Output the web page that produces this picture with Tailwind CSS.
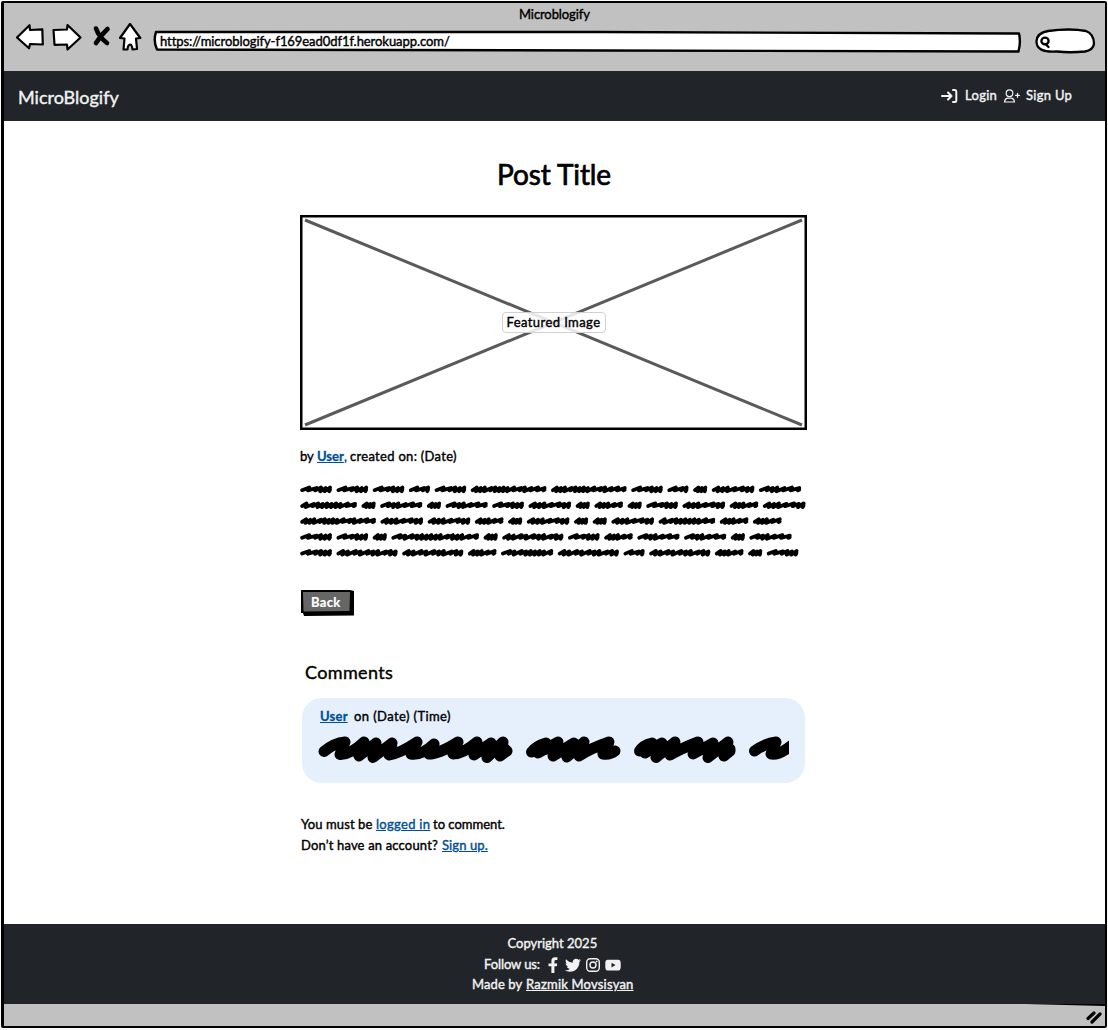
<!DOCTYPE html>
<html lang="en">
<head>
<meta charset="utf-8">
<title>Microblogify</title>
<script src="https://cdn.jsdelivr.net/npm/@tailwindcss/browser@4"></script>
</head>
<body class="h-[1030px] w-[1108px] overflow-hidden bg-[#fafafa] p-[1px] font-[Lato,sans-serif] text-[13px] leading-[20px] text-black [-webkit-text-stroke:0.4px_currentColor]">
<div class="flex h-[1027px] w-[1106px] flex-col overflow-hidden rounded-[2px] border-2 border-black border-l-[3px] bg-white">
  <header class="h-[68px] shrink-0 bg-[#c1c1c1]">
    <div class="flex h-[20px] justify-center pt-[1px]"><span class="w-[71px] whitespace-nowrap tracking-[-0.1px]">Microblogify</span></div>
    <div class="flex h-[32px] items-start pl-[11px]">
      <svg class="h-[30px] w-[130px] shrink-0" viewBox="15 23 130 30" fill="#fff" stroke="#000" stroke-width="2.2" stroke-linejoin="round" stroke-linecap="round">
        <path d="M17 37.5 L29.5 25.2 L30 30 L42.3 29.3 L42.8 44.5 L30 44 L29 48.2 Z"/>
        <path d="M53.5 30 L67 29.5 L67.5 25 L80.5 37.5 L67.5 49.5 L67 44.5 L54.5 44.8 Z"/>
        <path d="M96 28.500Q99 37 107 43 M107.500 29 Q101 35 96 43" fill="none" stroke-width="4.600"/>
        <path d="M130 24 L140.300 38 L136 38.500 L137 49 L132.500 49.500 Q132 44.500 130 44.500 Q127.800 45 127.500 49.500 L123.500 49.500 L124.500 38.500 L120 38 Z"/>
      </svg>
      <div class="relative ml-[7px] mt-[6px] h-[24px] w-[870px] shrink-0">
        <svg class="h-full w-full" viewBox="152 29 870 24" fill="#fff" stroke="#000" stroke-width="2.4" stroke-linejoin="round"><path d="M156 32 L600 32 L1019 33.500 Q1021 42 1018.500 51.500 L600 50.500 L157 49.500 Q153 41 156 32Z"/></svg>
        <span class="absolute left-[8px] top-[2px] w-[290px] whitespace-nowrap tracking-[-0.06px]">https://microblogify-f169ead0df1f.herokuapp.com/</span>
      </div>
      <svg class="ml-[13px] mt-[4px] h-[28px] w-[62px] shrink-0" viewBox="1035 27 62 28" fill="#fff" stroke="#000" stroke-width="2.3" stroke-linecap="round"><path d="M1048 31 Q1070 28 1086 31 Q1094 34 1094 44 Q1093 50 1085 51.500 Q1070 53 1057 51.500 Q1036 53 1036.500 41 Q1037 33 1048 31Z"/><ellipse cx="1045" cy="41" rx="3.600" ry="3.300"/><path d="M1046 44.500 L1048.500 47"/></svg>
    </div>
  </header>
  <nav class="flex h-[50px] shrink-0 items-center bg-[#212529] pl-[14px] text-[#f2f2f2]">
    <span class="w-[922px] whitespace-nowrap pt-px text-[18px]">MicroBlogify</span>
    <svg class="h-[18px] w-[18px]" viewBox="940 87 18 18" fill="none" stroke="currentColor" stroke-width="2" stroke-linecap="round" stroke-linejoin="round"><path d="M942 96H951M948 92.500L951.500 96L948 99.500M953 90H955Q956.300 90 956.300 91.500V100.500Q956.300 102 955 102H953"/></svg>
    <span class="ml-[7px] w-[38px] whitespace-nowrap pb-[2px] tracking-[0.3px]">Login</span>
    <svg class="h-[18px] w-[18px]" viewBox="1003 87 18 18" fill="none" stroke="currentColor" stroke-width="1.200" stroke-linecap="round"><circle cx="1009.500" cy="93.200" r="3.300"/><path d="M1004.500 102Q1005 98.500 1007.500 98.200H1011.500Q1014 98.500 1014.500 102ZM1017.500 93.300V97.300M1015.500 95.300H1019.500"/></svg>
    <span class="ml-[5px] w-[46px] whitespace-nowrap pb-[2px] tracking-[0.3px]">Sign Up</span>
  </nav>
  <main class="flex h-[803px] shrink-0 flex-col pl-[296px]">
    <h1 class="ml-[197px] mt-[33px] h-[40px] text-[28px] leading-[40px] tracking-[-0.1px] [-webkit-text-stroke:0.7px_currentColor]">Post Title</h1>
    <div class="relative mt-[21px] flex h-[215px] w-[507px] items-center justify-center border-2 border-black">
      <svg class="absolute inset-0 h-full w-full" viewBox="0 0 503 211" fill="none" stroke="#5a5a5a" stroke-width="3"><path d="M3 3L500 208M3 208L500 3"/><rect x="0" y="0" width="503" height="211" stroke="#000" stroke-width="1"/></svg>
      <div class="relative flex h-[21px] w-[104px] justify-center rounded-[4px] border border-[#d0d0d0] bg-white/85 leading-[18px]"><span class="w-[94px] whitespace-nowrap tracking-[0.42px]">Featured Image</span></div>
    </div>
    <p class="mt-[16px] flex h-[20px] whitespace-nowrap"><span class="w-[17px]">by</span><span class="w-[33px] text-[#004f98]"><a class="font-bold underline [-webkit-text-stroke:0.3px_currentColor]">User</a><span class="underline">,</span></span><span class="w-[107px] tracking-[0.3px]">created on: (Date)</span></p>
    <svg id="body-text" class="mt-[15px] h-[80px] w-[510px]" viewBox="300 481 510 80" fill="none" stroke="#000" stroke-width="3.700" stroke-linecap="round" stroke-linejoin="round"></svg>
    <div class="relative mt-[28px] h-[27px] w-[54px]">
      <svg class="h-full w-full" viewBox="300 589 54 27"><path d="M301 590L350 590L354 591V615.500L304 616L303 613L301 613Z"/><path d="M303 592L350 592L349.500 611L303.500 611.500Z" fill="#666"/></svg>
      <span class="absolute left-[11px] top-[3px] w-[30px] whitespace-nowrap font-bold tracking-[0.3px] text-white [-webkit-text-stroke:0.2px_currentColor]">Back</span>
    </div>
    <h2 class="ml-[5px] mt-[44px] h-[24px] text-[18px] leading-[24px] tracking-[0.35px]">Comments</h2>
    <section class="ml-[2px] mt-[14px] h-[85px] w-[503px] rounded-[20px] bg-[#e6f0fd] pl-[16px] pt-[8px]">
      <div class="flex h-[20px] whitespace-nowrap pl-[2px]"><a class="w-[28px] font-bold tracking-[0.2px] text-[#004f98] underline [-webkit-text-stroke:0.3px_currentColor]">User</a><span class="ml-[6px] w-[97px] tracking-[0.4px]">on (Date) (Time)</span></div>
      <svg class="mt-[6px] h-[32px] w-[471px]" viewBox="318 733 471 32" fill="none" stroke="#000" stroke-width="11" stroke-linecap="round" stroke-linejoin="round">
        <path d="M324 752.500Q334 744 345 743L340 755.500Q350 756 364 743L359 757L376 744L373 758.500L392 744L389 756Q399 755 417 743L411 755Q421 757 434 745L429 755Q439 755 458 743L453 755Q463 755 477 743L474 756L491 744L487 758.500L503 743L500 757L507 752"/>
        <path d="M531.500 753Q536 747 546 744L538 754L558 743L553 757L574 744L567 758L584 743L579 757Q589 750 609 743L603 755Q610 756 615 752"/>
        <path d="M639.500 752Q643 746 652 744L645 754L662 744L656 758.500L675 743L670 756Q680 750 698 743L693 755L713 744L708 758.500L728 743L724 757L730 752"/>
        <path d="M754.500 752Q766 744 776 743L771 755Q778 757 792 746"/>
        <path d="M362 751H393M474 750H505M537 750H580M645 750H673M706 750H730"/>
      </svg>
    </section>
    <p class="ml-[1px] mt-[31px] flex h-[20px] whitespace-nowrap"><span class="w-[75px] tracking-[0.1px]">You must be</span><a class="w-[54px] text-[#004f98] underline tracking-[0.3px]">logged in</a><span class="ml-[3px] w-[72px]">to comment.</span></p>
    <p class="ml-[1px] mt-[1px] flex h-[20px] whitespace-nowrap"><span class="w-[141px] tracking-[0.17px]">Don’t have an account?</span><a class="w-[46px] text-[#004f98] underline tracking-[0.1px]">Sign up.</a></p>
  </main>
  <footer class="flex h-[80px] shrink-0 flex-col items-center bg-[#212529] pr-[3px] pt-[9px] text-[#f2f2f2]">
    <p class="h-[20px] w-[91px] whitespace-nowrap">Copyright 2025</p>
    <p class="mt-[1px] flex h-[20px] items-center"><span class="w-[62px] whitespace-nowrap tracking-[-0.1px]">Follow us:</span>
      <svg class="mt-[2px] h-[18px] w-[76px]" viewBox="546 956 76 18" fill="currentColor"><path d="M551.400 973V966.300H548.500V963.500H551.400V961Q551.400 957.300 555 957.300H557.400V960H556Q554.400 960 554.400 961.400V963.500H557.300L556.800 966.300H554.400V973Z"/><path transform="translate(565 957.200) scale(.0312)" d="M459 152c.3 4.500.3 9 .3 14 0 139-106 299-299 299-59 0-115-17-161-47 8 1 16 1.300 25 1.300 49 0 94-17 130-45-46-1-85-31-98-73 6 1 13 1.600 20 1.600 9 0 19-1.300 28-3.600-48-10-84-52-84-103v-1c14 8 30 13 47 13-28-19-47-51-47-87 0-19 5-37 14-53 52 64 129 105 216 110-2-8-3-16-3-24 0-58 47-105 105-105 30 0 58 13 77 33 24-5 46-13 67-25-8 24-24 45-46 58 21-2 42-8 60-16-14 21-32 39-52 54z"/><g fill="none" stroke="currentColor" stroke-width="1.400"><rect x="586.700" y="958.700" width="12.600" height="12.600" rx="3.500"/><circle cx="593" cy="965" r="3"/></g><circle cx="596.700" cy="961.400" r=".9"/><path fill-rule="evenodd" d="M607.500 959.700H618.500Q620.700 960 620.700 962.500V967.500Q620.700 970 618.500 970.500H607.500Q605.300 970 605.300 967.500V962.500Q605.300 960 607.500 959.700ZM611.500 962.800V967.400L615.500 965.100Z"/></svg></p>
    <p class="flex h-[20px] whitespace-nowrap"><span class="w-[54px] tracking-[0.1px]">Made by</span><a class="w-[108px] underline tracking-[0.2px]">Razmik Movsisyan</a></p>
  </footer>
  <div class="flex grow justify-end bg-[#c1c1c1]"><svg class="h-[22px] w-[140px]" viewBox="965 1004 140 22" stroke="#000" stroke-width="3.200" stroke-linecap="round"><path d="M1025 1004L1105 1004V1006Z" stroke="none"/><path d="M1088 1018.500L1094 1013M1092 1022L1100 1014"/></svg></div>
</div>
<script>
  // Scribbled placeholder words: l = loose stroke, d = dense stroke
  const words = {
    A:[31.5,'llddd'], B:[21,'lld'], C:[75.5,'dddlddddlldlll'], D:[56.5,'dlddddddll'], E:[14,'ddd'],
    F:[42,'lddlll'], G:[42.500,'dddlldd'], H:[28.500,'dddll'], I:[61,'ddldlddldd'], J:[87.500,'ldlddddddldddll'], K:[52,'ldldddddl']
  };
  const lines = ['AAABACCABEGF','DEFEFAGEHEAGHG','CGGHEGEEGDHH','AAEJEIAHFFEF','AIIHKIBIHEA'];
  let svg = '';
  lines.forEach((line, i) => {
    let x = 300.3;
    const y = 489.2 + i * 15.85;
    for (const c of line) {
      const [w, s] = words[c];
      const total = [...s].reduce((a, k) => a + (k === 'l' ? 8 : 5), 0);
      const f = (w - 3.500) / total;
      let p = x + 1.800, d = `M${p} ${y + 1}`;
      [...s].forEach((k, n) => {
        const a = (k === 'l' ? 8 : 5) * f;
        d += `L${p + a} ${y - 1.700 + (n % 2) * .5}L${p + a * .8} ${y + (k === 'l' ? 1.200 : 2.100)}`;
        p += a;
      });
      svg += `<path d="${d}L${x + w - 1.800} ${y + .6}"/>`;
      x += w + 4.700;
    }
  });
  document.getElementById('body-text').innerHTML = svg;
</script>
</body>
</html>
